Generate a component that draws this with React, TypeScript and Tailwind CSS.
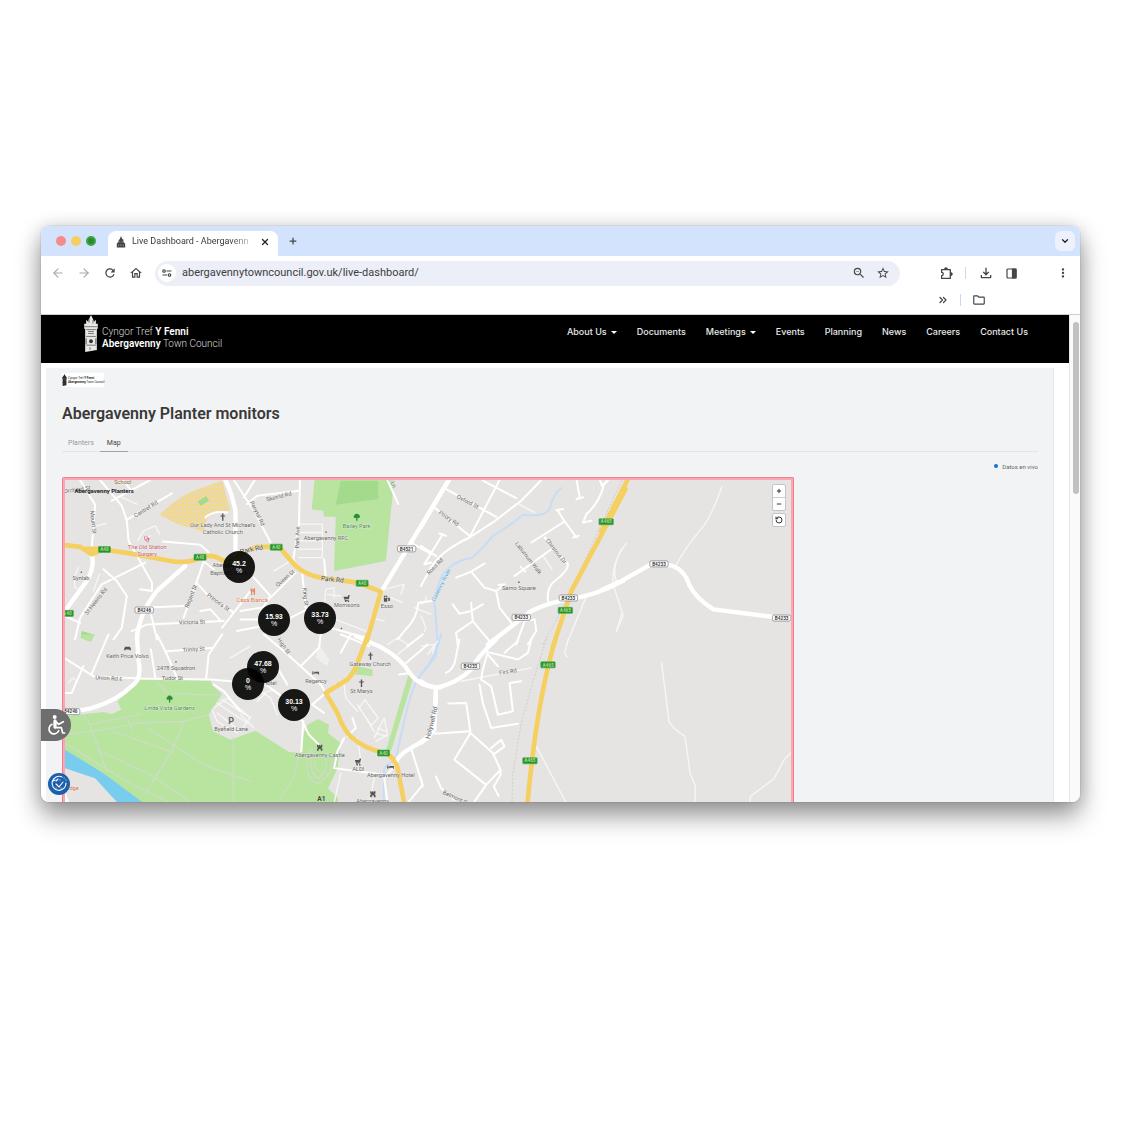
import { useState } from 'react'
import { ArrowLeft, ArrowRight, ChevronDown, ChevronsRight, Minus, Plus, RotateCcw, X } from 'lucide-react'
import {
  MdMoreVert, MdOutlineFileDownload, MdOutlineFolder, MdOutlineHome, MdOutlineZoomOut, MdRefresh, MdStarBorder,
} from 'react-icons/md'

type Label = { t: string; x: number; y: number; r?: number; c?: string; s?: number; b?: boolean }
type Icon = { k: keyof typeof icons; x: number; y: number; c?: string }
type Shield = { t: string; x: number; y: number; green?: boolean }

type Tile = {
  x: number
  y: number
  areas?: { d: string; fill: string }[]
  paths?: string
  river?: string
  track?: string
  minor?: string
  major?: string
  trunk?: string
  rail?: string
  labels?: Label[]
  icons?: Icon[]
  shields?: Shield[]
}

const icons = {
  cross: 'M-2 -11h4v6h5v3h-5v13h-4v-13h-5v-3h5z',
  tree: 'M-9 -1a6 6 0 0 1 2-7a8 8 0 0 1 14 0a6 6 0 0 1 2 7q-4 3-7 1v9h-4v-9q-3 2-7-1z',
  cart: 'M9 -9l-3 12h-11l1 2h9v2h-11l-1-4l-3-8h13l2-5zM-5 11h4v-4h-4zM3 11h4v-4h-4z',
  fuel: 'M-9 -9h10v18h-10zM-7 -6v4h6v-4zM3 -6l6 4v9h-5v-6h-2v-2h4v-2z',
  castle: 'M-8 -9h4v3h2v-3h4v3h2v-3h4v7h-2v4h2v7h-5v-5h-6v5h-5v-7h2v-4h-2z',
  bed: 'M-11 -6h3v5h3v-3h14v8h-3v-3h-14v3h-3z',
  car: 'M-7 -5h14l3 5v5h-4v-2h-12v2h-4v-5z',
  dot: 'M-2 -2h4v4h-4z',
  fork: 'M-6 -10h1v6h2v-6h2v6h2v-6h1v7l-2 3v10h-3v-10l-3-3zM5 -10h3v20h-3v-8h-2v-7z',
  steth: 'M-9 -8h4v2h-2v5q3 6 6 0v-5h-2v-2h4v7q-1 4-4 5q2 7 6 2v-4a3 3 0 1 1 2 0v4q-5 8-10-2q-4-1-4-5z',
}

const park = '#b8e4a0'

// every tile is drawn on a 3x grid, x and y place it on the map
const tiles: Tile[] = [
  {
    x: -5,
    y: -6,
    areas: [
      { d: 'M485 20L510 108L450 120Q430 145 432 172L350 150L298 122Q350 70 400 50Z', fill: 'url(#school)' },
      { d: 'M412 82L438 66L446 80L420 95Z', fill: '#a3da8c' },
      { d: 'M65 470L100 480L95 500L62 490Z', fill: '#a3da8c' },
    ],
    minor:
      'M60 18L105 92L98 180L95 225M120 18L185 95L200 140L205 200L240 262M155 80L270 18M198 138L335 58M430 262L408 325L370 430M408 325L440 360L520 415M308 202L420 212L445 235M255 265L125 330L60 430L45 495M240 262L275 325L275 350L240 345M130 285L170 320L200 365L185 460L160 495M15 425L60 445M240 400L370 395M215 470L260 450L490 440M485 460L570 350M435 130Q455 110 500 115M270 410L290 495M420 410L450 405L480 438M430 262L460 285M185 15L210 45',
    track: 'M232 200L250 170L285 155L298 180M250 195L270 185M110 155L138 148M55 280L42 310L45 340L60 345M185 70L230 90M100 350L118 300',
    major: 'M15 410L80 320Q105 280 95 240M230 495Q235 420 290 350L375 275M495 18Q515 60 525 110L525 250',
    trunk: 'M10 212L60 218L95 240L130 226L200 236L320 258Q370 270 410 255Q450 235 480 255L545 275M75 224L125 224L95 240',
    labels: [
      { t: 'School', x: 188, y: 29, c: '#8a6d3b' },
      { t: 'Orchard St', x: 52, y: 52, r: -8 },
      { t: 'Abergavenny Planters', x: 132, y: 57, c: '#222', s: 18, b: true },
      { t: 'Cantref Rd', x: 260, y: 110, r: -32 },
      { t: 'Mount St', x: 94, y: 145, r: 84 },
      { t: "Our Lady And St Michael's", x: 487, y: 158 },
      { t: 'Catholic Church', x: 487, y: 179 },
      { t: 'The Old Station', x: 261, y: 223, c: '#c5616b' },
      { t: 'Surgery', x: 261, y: 245, c: '#c5616b' },
      { t: 'Synlab', x: 63, y: 317 },
      { t: "St Helen's Rd", x: 112, y: 384, r: -52 },
      { t: 'Regent St', x: 397, y: 368, r: -68 },
      { t: "Prince's St", x: 470, y: 388, r: 36 },
      { t: 'Victoria St', x: 395, y: 449, r: -2 },
      { t: 'Abergavenny', x: 505, y: 279 },
      { t: 'Baptist Church', x: 505, y: 301 },
      { t: 'Casa Bianca', x: 575, y: 382, c: '#e0764a' },
    ],
    icons: [
      { k: 'cross', x: 487, y: 129 },
      { k: 'dot', x: 64, y: 294 },
      { k: 'steth', x: 261, y: 195, c: '#e0607a' },
      { k: 'fork', x: 575, y: 352, c: '#e0764a' },
    ],
    shields: [
      { t: 'A40', x: 133, y: 226, green: true },
      { t: 'A40', x: 419, y: 249, green: true },
      { t: 'A40', x: 22, y: 417, green: true },
      { t: 'B4246', x: 252, y: 407 },
    ],
  },
  {
    x: 175,
    y: -6,
    areas: [
      { d: 'M222 15L460 15L435 260L280 290L285 128L250 128L248 110L213 106Z', fill: park },
      { d: 'M300 20L412 20L412 75L285 92Z', fill: '#a3da8c' },
    ],
    track:
      'M175 150H245V250H175M175 175H245M175 200H245M175 225H245M100 290L150 260M250 400L255 345L280 340L280 370M260 360L300 365M430 345L490 330L480 360M450 370L485 385M245 460L270 430L375 470M390 430L430 440M520 400L570 420',
    minor:
      'M20 90L50 65L175 50M178 18L175 150L158 255L172 285M-20 18L40 110L90 205M10 70L45 15M250 255L255 310M185 300L195 400M90 370L165 295M40 310L90 365L60 410M440 18L472 90M510 205L570 240M0 435L60 435M250 455L375 490M150 430L210 400M570 380L532 385Q530 430 490 470L470 495M0 410L60 400M-10 470L140 440',
    major: 'M425 345L510 205L625 15',
    trunk: 'M-30 262Q20 225 50 218L115 218L165 275Q200 305 250 312L350 325L420 352L378 500',
    labels: [
      { t: 'Skerrid Rd', x: 116, y: 73, r: -14 },
      { t: 'y Ln', x: 450, y: 28, r: 65 },
      { t: 'Penytal Rd', x: 45, y: 120, r: 64 },
      { t: 'Park Ave', x: 176, y: 190, r: -88 },
      { t: 'Bailey Park', x: 347, y: 161, c: '#3f8a3c' },
      { t: 'Abergavenny RFC', x: 256, y: 198 },
      { t: 'Park Rd', x: 34, y: 232, r: -12, s: 20, c: '#444' },
      { t: 'Queen St', x: 137, y: 316, r: -40 },
      { t: 'Park Rd', x: 274, y: 322, r: 5, s: 20, c: '#444' },
      { t: 'King St', x: 189, y: 368, r: 84 },
      { t: 'Morrisons', x: 318, y: 399 },
      { t: 'Esso', x: 438, y: 401 },
    ],
    icons: [
      { k: 'tree', x: 348, y: 131, c: '#2d8c3c' },
      { k: 'dot', x: 256, y: 174 },
      { k: 'cart', x: 318, y: 372 },
      { k: 'fuel', x: 438, y: 373 },
      { k: 'dot', x: 302, y: 462 },
    ],
    shields: [
      { t: 'A40', x: 107, y: 219, green: true },
      { t: 'A40', x: 364, y: 327, green: true },
      { t: 'B4521', x: 497, y: 224 },
    ],
  },
  {
    x: -25,
    y: 154,
    areas: [
      { d: 'M300 135L510 138L518 155L545 178L505 240L518 290L570 315L645 288L745 352L780 355L788 300L800 270L832 253L865 270L862 295L900 325L890 400L862 460L892 490L890 520L320 520L190 415L75 348L75 245L190 232L215 238L243 225L232 200L260 175Z', fill: park },
      { d: 'M75 345L190 415L320 512L240 512L165 430L75 400Z', fill: '#78ccee' },
      { d: 'M75 470L92 512L75 512Z', fill: '#ffffff' },
      { d: 'M125 0L165 0L150 22L125 12Z', fill: park },
    ],
    paths:
      'M130 240L150 270L200 410M75 300L190 285L300 265L430 260L505 240M150 270L300 238M220 290L390 350M325 282L490 390L630 440M430 262L395 350L315 475M170 345L330 420L460 508M75 325L260 440L400 508M350 140L380 175L470 180L540 180M578 310V508M260 250L275 285',
    track: 'M520 220L560 190L625 245M530 235L600 290M530 205L620 265M545 195L630 250M600 290L632 245M85 145L100 130L110 140M570 70L630 35M515 225L530 260L590 295',
    minor:
      'M75 72L160 125L300 132L510 135L600 142M205 0L155 118M75 175L95 175L130 95M350 0L380 60L410 130M345 130L332 45M380 50L520 40M545 0L505 60L497 135M520 150L550 170L600 230',
    major: 'M290 0L295 80Q305 130 280 150Q230 200 150 222L75 235',
    labels: [
      { t: 'Keith Price Volvo', x: 262, y: 70 },
      { t: 'Trinity St', x: 460, y: 50, r: -4 },
      { t: '2478 Squadron', x: 407, y: 106 },
      { t: 'Union Rd E', x: 206, y: 137, r: 4 },
      { t: 'Tudor St', x: 396, y: 136 },
      { t: 'Linda Vista Gardens', x: 388, y: 225, c: '#3f8a3c' },
      { t: 'P', x: 572, y: 268, s: 27, b: true, c: '#666' },
      { t: 'Byefield Lane', x: 572, y: 288 },
      { t: 'Bridge', x: 92, y: 466, c: '#d0733c' },
    ],
    icons: [
      { k: 'car', x: 262, y: 42 },
      { k: 'dot', x: 407, y: 82 },
      { k: 'tree', x: 388, y: 195, c: '#2d8c3c' },
    ],
    shields: [{ t: 'B4246', x: 92, y: 231 }],
  },
  {
    x: 175,
    y: 154,
    areas: [
      { d: 'M505 112L518 125L450 350L436 345Z', fill: park },
      { d: 'M350 95L395 105L395 125L342 120Z', fill: park },
      { d: 'M235 30L265 75L260 95L225 70Z', fill: '#eeefef' },
    ],
    paths: 'M215 340Q200 420 235 430Q265 400 255 370M205 345Q185 440 235 445Q285 410 270 365M220 380Q225 410 240 410M175 355L160 430L120 490',
    river: 'M600 0Q590 60 540 120Q510 160 490 260L465 370L430 400L428 505',
    track:
      'M355 220L372 195L412 250L392 272ZM400 310L430 250L440 300L405 320M410 280L435 290M405 295L438 305M310 150L315 190L350 230M300 415L280 505M400 430L385 505M350 310L360 380M440 30L470 10L500 30M470 60L520 20M560 60L590 20M50 165L90 190L110 240M70 175L100 165M0 240L40 280M280 150L310 150M50 200L75 175M350 210L400 290',
    minor:
      'M70 0L130 50L180 95L240 150L255 175M180 95L235 40L240 0M255 175L215 210L250 235M75 150L130 190M105 90L140 150M182 255L205 300L240 335M188 260L182 350M310 310L290 350L280 400L430 420M320 305L345 280L335 250M330 0L300 55M300 0L385 35M510 115L475 120M510 340L545 450L500 505M460 395L430 430L440 505M545 0L500 35M490 90L560 30',
    major: 'M345 5L420 38Q480 70 510 120Q540 160 600 158M585 160L582 230Q580 290 560 310L510 340Q480 355 465 380',
    trunk: 'M382 0L350 85Q340 115 320 135L255 175L290 235Q310 290 335 310Q370 340 420 352Q455 355 470 400L492 515',
    labels: [
      { t: 'High St', x: 125, y: 38, r: 55 },
      { t: 'Gateway Church', x: 388, y: 94 },
      { t: 'Regency', x: 226, y: 144 },
      { t: 'St Marys', x: 362, y: 175 },
      { t: 'Hotel', x: 88, y: 152 },
      { t: 'Holywell Rd', x: 578, y: 266, r: -76, s: 19 },
      { t: 'Abergavenny Castle', x: 237, y: 367 },
      { t: 'ALDI', x: 352, y: 410 },
      { t: 'Abergavenny Hotel', x: 450, y: 426 },
      { t: 'A1', x: 242, y: 497, s: 20, c: '#444', b: true },
      { t: 'Abergavenny', x: 395, y: 505 },
    ],
    icons: [
      { k: 'cross', x: 389, y: 65 },
      { k: 'cross', x: 362, y: 146 },
      { k: 'bed', x: 226, y: 116 },
      { k: 'castle', x: 237, y: 339 },
      { k: 'cart', x: 352, y: 381 },
      { k: 'bed', x: 450, y: 398 },
      { k: 'castle', x: 396, y: 478 },
    ],
    shields: [{ t: 'A40', x: 428, y: 355, green: true }],
  },
  {
    x: 355,
    y: -6,
    river: 'M420 42Q395 60 385 105Q370 130 305 122Q260 160 215 185Q180 230 150 252Q90 260 60 310Q35 370 42 400L50 510',
    rail: 'M600 20L430 390L365 510',
    track: 'M495 365L435 510M600 225Q565 290 590 330M600 420L585 470M365 245L392 285M290 88L320 105L340 115M0 425L15 460L10 470M15 365L15 380L0 390',
    minor:
      'M360 18L300 80L215 145L145 190Q60 230 30 280L0 335M235 18L148 185M75 45L225 128M185 20L285 72M40 100L145 185M0 215L45 245M65 180L10 270L30 265M55 178L75 185M465 15L475 70M465 75L485 70M535 18L545 40Q530 90 495 120L485 145L510 140M560 18L545 35M330 205L430 142L408 108M430 142L465 190M405 108L425 105M455 190L472 185M280 305L390 225M298 278L312 292M370 190L440 270Q440 290 400 320Q375 340 380 380M105 310L150 292L190 340L225 350L235 400L270 445M150 292L190 268M225 350L250 330L232 332M95 390L115 418L150 410L185 390M150 385L155 440L205 500M155 440L105 475L110 510M285 510L310 440L340 435L345 470L320 510',
    major: 'M200 510L330 410Q380 385 440 375Q520 365 605 320M0 158L85 15',
    trunk: 'M612 45L530 200L450 350L395 515',
    labels: [
      { t: 'Oxford St', x: 137, y: 88, r: 27 },
      { t: 'Priory Rd', x: 80, y: 137, r: 34 },
      { t: 'Ross Rd', x: 46, y: 280, r: -46 },
      { t: 'Gavenny River', x: 65, y: 335, r: -63, c: '#4aa8d8' },
      { t: 'Laburnum Walk', x: 317, y: 255, r: 52 },
      { t: 'Chestnut Dr', x: 400, y: 234, r: 52 },
      { t: 'Sarno Square', x: 293, y: 348 },
    ],
    icons: [{ k: 'dot', x: 293, y: 324 }],
    shields: [
      { t: 'A465', x: 554, y: 143, green: true },
      { t: 'A465', x: 432, y: 408, green: true },
      { t: 'B4233', x: 441, y: 371 },
      { t: 'B4233', x: 300, y: 429 },
    ],
  },
  {
    x: 535,
    y: -6,
    track: 'M360 38Q340 100 310 150Q250 220 222 275M75 208Q30 260 35 330L65 425L45 470M15 20L-2 35',
    major: 'M0 347L60 320L145 272L200 272Q245 280 262 330Q280 370 335 405L570 435',
    trunk: 'M82 10L0 170',
    shields: [
      { t: 'B4233', x: 172, y: 269 },
      { t: 'B4233', x: 539, y: 431 },
    ],
  },
  {
    x: 355,
    y: 159,
    river: 'M50 0L45 50L0 105',
    rail: 'M375 0L340 110L300 250L275 400L272 490',
    track:
      'M345 320L435 490M440 0L430 40L437 52M720 70L742 245Q750 265 790 290L805 400L820 435V490M1110 335L1088 358L1055 418L985 470V490M120 125L330 85M0 20L40 15L35 40',
    minor:
      'M115 0L105 50Q100 90 75 100M200 38Q250 50 290 60L320 40L330 0M250 40L290 5M200 38L185 90L180 120L210 140L230 225L275 215L265 130L300 125M200 45L230 80M175 135L185 190L210 265L290 252M82 192L135 190L148 275L40 282M148 280L100 360L195 435L238 390L215 340ZM210 325L240 300L250 320L220 342M195 435L160 485M238 390V405L218 440L232 468M45 410L60 445L100 480M0 415L5 440',
    major: 'M225 0Q170 50 150 90Q110 130 45 145Q10 135 0 125M45 145L40 270L0 310',
    trunk: 'M402 0Q345 190 318 500',
    labels: [
      { t: 'Firs Rd', x: 261, y: 102, r: -8 },
      { t: 'Belmont Cr', x: 102, y: 479, r: 24 },
    ],
    shields: [
      { t: 'A465', x: 380, y: 76, green: true },
      { t: 'A465', x: 326, y: 363, green: true },
      { t: 'B4233', x: 148, y: 80 },
    ],
  },
]

const layers = [
  { key: 'paths', stroke: '#cddcc4', width: 4 },
  { key: 'river', stroke: '#c8dcf8', width: 6 },
  { key: 'rail', stroke: '#cfcfcd', width: 3 },
  { key: 'track', stroke: '#f6f7f6', width: 4 },
  { key: 'minor', stroke: '#ffffff', width: 6 },
  { key: 'major', stroke: '#ffffff', width: 13 },
  { key: 'trunk', stroke: '#f5d061', width: 14 },
] as const

const planters = [
  { value: '45.2', x: 174, y: 87 },
  { value: '15.93', x: 209, y: 140 },
  { value: '33.73', x: 255, y: 138 },
  { value: '0', x: 183, y: 204 },
  { value: '47.68', x: 198, y: 187 },
  { value: '30.13', x: 229, y: 225 },
]

const nav = [
  { label: 'About Us', menu: true },
  { label: 'Documents' },
  { label: 'Meetings', menu: true },
  { label: 'Events' },
  { label: 'Planning' },
  { label: 'News' },
  { label: 'Careers' },
  { label: 'Contact Us' },
]

function tileTransform(t: Tile) {
  return `translate(${t.x} ${t.y}) scale(${1 / 3})`
}

function StreetMap() {
  return (
    <svg
      viewBox="0 0 724 322"
      preserveAspectRatio="xMinYMin slice"
      className="block h-[322px] w-full font-['Roboto',sans-serif]"
      role="img"
      aria-label="Map of Abergavenny"
    >
      <defs>
        <pattern id="school" width="12" height="12" patternUnits="userSpaceOnUse">
          <rect width="12" height="12" fill="#f5d888" />
          <circle cx="3" cy="3" r="3" fill="#dedccf" />
          <circle cx="9" cy="9" r="2" fill="#dedccf" />
        </pattern>
      </defs>
      <rect width="724" height="322" fill="#e5e4e2" />
      {tiles.map((t, i) => (
        <g key={i} transform={tileTransform(t)}>
          {t.areas?.map(a => <path key={a.d} d={a.d} fill={a.fill} />)}
        </g>
      ))}
      {layers.map(l => (
        <g key={l.key} fill="none" stroke={l.stroke} strokeWidth={l.width} strokeLinejoin="round" strokeLinecap="round">
          {tiles.map((t, i) => t[l.key] && (
            <path key={i} d={t[l.key]} transform={tileTransform(t)} strokeDasharray={l.key === 'rail' ? '4 7' : undefined} />
          ))}
        </g>
      ))}
      {tiles.map((t, i) => (
        <g key={i} transform={tileTransform(t)} textAnchor="middle">
          {t.icons?.map((m, n) => (
            <path key={n} d={icons[m.k]} fill={m.c ?? '#555'} fillRule="evenodd" transform={`translate(${m.x} ${m.y})`} />
          ))}
          {t.labels?.map((m, n) => (
            <text
              key={n}
              transform={`translate(${m.x} ${m.y}) rotate(${m.r ?? 0})`}
              fontSize={m.s ?? 17}
              fontWeight={m.b ? 700 : 400}
              fill={m.c ?? '#666'}
              stroke="#f2f1ef"
              strokeWidth={m.b ? 0 : 2}
              paintOrder="stroke"
            >
              {m.t}
            </text>
          ))}
          {t.shields?.map((m, n) => {
            const w = m.green ? (m.t.length > 3 ? 43 : 36) : 55
            return (
              <g key={n} transform={`translate(${m.x} ${m.y})`}>
                <rect
                  x={-w / 2}
                  y={-9}
                  width={w}
                  height={18}
                  rx={m.green ? 2 : 5}
                  fill={m.green ? '#26922f' : '#fff'}
                  stroke={m.green ? '#4dad55' : '#777'}
                  strokeWidth={2}
                />
                <text y={5} fontSize={14} fontWeight={700} fill={m.green ? '#a8d98a' : '#444'}>{m.t}</text>
              </g>
            )
          })}
        </g>
      ))}
    </svg>
  )
}

function Tower({ className }: { className: string }) {
  return (
    <svg viewBox="0 0 16 38" className={className} fill="currentColor" aria-hidden="true">
      <path d="M8 0l2 4 1 3 2-2v4h2v5h-1v22l-12 2V14H1V9h2V5l2 2 1-3z" />
      <path d="M1 12h14M3 15h10M3 22h10M3 31h10M6 4v4M10 5v4M5 17h6M5 19h6M7 33v3" stroke="#777" strokeWidth="1" fill="none" />
      <circle cx="8" cy="27" r="2" fill="#333" />
      <path d="M3 24v6M13 24v6" stroke="#555" strokeWidth="1" />
    </svg>
  )
}

function TuneIcon() {
  return (
    <svg viewBox="0 0 20 16" className="h-2 w-2.5" fill="none" stroke="currentColor" strokeWidth="2.4" aria-hidden="true">
      <path d="M9 4h10M1 12h9" />
      <circle cx="4" cy="4" r="2.5" />
      <circle cx="15" cy="12" r="2.5" />
    </svg>
  )
}

function ExtensionIcon() {
  return (
    <svg viewBox="0 0 24 24" className="h-[13px] w-[13px]" fill="none" stroke="currentColor" strokeWidth="2.4" strokeLinejoin="round" aria-hidden="true">
      <path d="M3 5h16v16H3v-5c4 0 4-6 0-6z" />
      <path d="M8 4a3 3 0 0 1 6 0zM20 10a3 3 0 0 1 0 6z" fill="currentColor" strokeWidth="1" />
    </svg>
  )
}

function SidePanelIcon() {
  return (
    <svg viewBox="0 0 22 22" className="h-[11px] w-[11px]" fill="none" stroke="currentColor" strokeWidth="2.4" aria-hidden="true">
      <rect x="2" y="2" width="18" height="18" rx="2" />
      <path d="M13 2h7v18h-7z" fill="currentColor" />
    </svg>
  )
}

function WheelchairIcon() {
  return (
    <svg viewBox="0 0 60 64" className="h-[22px] w-5" fill="none" stroke="currentColor" strokeWidth="5" strokeLinecap="round" strokeLinejoin="round" aria-hidden="true">
      <circle cx="26" cy="8" r="6" fill="currentColor" stroke="none" />
      <path d="M27 20v18" strokeWidth="10" />
      <path d="M28 20l10 10 14-8M28 40h18l4 16h6" />
      <path d="M18 30a15 15 0 1 0 20 19" />
    </svg>
  )
}

function BrowserChrome() {
  const [url, setUrl] = useState('abergavennytowncouncil.gov.uk/live-dashboard/')

  return (
    <div className="border-b border-[#cfcfd2] bg-white text-[#444746]">
      <div className="flex h-[30px] items-end bg-[#d3e3fd] pr-[5px] pl-[15px]">
        <div className="flex gap-[5px] self-center">
          <span className="h-2.5 w-2.5 rounded-full bg-[#f58c8c]" />
          <span className="h-2.5 w-2.5 rounded-full bg-[#f5cf60]" />
          <span className="h-2.5 w-2.5 rounded-full border-2 border-[#3fa33f] bg-[#2c8a34]" />
        </div>
        <div className="ml-3 flex h-[25px] w-[170px] items-center rounded-t-lg bg-white pr-2 pb-1 pl-2">
          <svg viewBox="0 0 16 20" className="h-3 w-2.5 shrink-0" fill="#444" aria-hidden="true">
            <path d="M8 0l2 5 2 1v4l3 3v6H1v-6l3-4V7l2-2z" />
            <path d="M6 8v3M10 8v3M4 14v3M8 13v4M12 14v3" stroke="#aaa" strokeWidth="1" />
          </svg>
          <span className="ml-1.5 bg-linear-to-r from-[#333] from-85% to-[#bbb] bg-clip-text font-['Roboto',sans-serif] text-[9px] whitespace-nowrap text-transparent">
            Live Dashboard - Abergavenn
          </span>
          <button aria-label="Close tab" className="ml-auto"><X className="h-2.5 w-2.5 text-[#222]" strokeWidth={3} /></button>
        </div>
        <button aria-label="New tab" className="ml-2.5 self-center"><Plus className="h-2.5 w-2.5" strokeWidth={3} /></button>
        <button aria-label="Search tabs" className="ml-auto flex h-5 w-5 items-center justify-center self-center rounded-md bg-[#edf1fb]">
          <ChevronDown className="h-2.5 w-2.5 text-[#222]" strokeWidth={3} />
        </button>
      </div>
      <div className="flex h-[34px] items-center px-2.5">
        <div className="flex items-center gap-3">
          <button aria-label="Back"><ArrowLeft className="h-3.5 w-3.5 text-[#a9a9a9]" /></button>
          <button aria-label="Forward"><ArrowRight className="h-3.5 w-3.5 text-[#a9a9a9]" /></button>
          <button aria-label="Reload"><MdRefresh className="h-3.5 w-3.5" /></button>
          <button aria-label="Home"><MdOutlineHome className="h-3.5 w-3.5" /></button>
        </div>
        <div className="ml-3 flex h-[25px] min-w-0 flex-1 items-center rounded-full bg-[#eceff8] pr-2.5 pl-[3px]">
          <button aria-label="Site information" className="flex h-[18px] w-[18px] shrink-0 items-center justify-center rounded-full bg-white">
            <TuneIcon />
          </button>
          <input
            aria-label="Address"
            value={url}
            onChange={e => setUrl(e.target.value)}
            className="ml-1.5 min-w-0 flex-1 bg-transparent font-['Roboto',sans-serif] text-[11px] text-[#3c3d40] outline-none"
          />
          <button aria-label="Zoom"><MdOutlineZoomOut className="h-3.5 w-3.5" /></button>
          <button aria-label="Bookmark" className="ml-2.5"><MdStarBorder className="h-3.5 w-3.5" /></button>
        </div>
        <div className="flex w-[170px] items-center pl-10">
          <button aria-label="Extensions"><ExtensionIcon /></button>
          <span className="mx-3 h-3 w-px bg-[#c6d8f8]" />
          <button aria-label="Downloads"><MdOutlineFileDownload className="h-4 w-4" /></button>
          <button aria-label="Side panel" className="ml-3"><SidePanelIcon /></button>
          <button aria-label="Menu" className="ml-auto"><MdMoreVert className="h-3.5 w-3.5" /></button>
        </div>
      </div>
      <div className="flex h-6 items-center justify-end pr-[94px] pb-1">
        <button aria-label="More bookmarks"><ChevronsRight className="h-3 w-3" strokeWidth={2.5} /></button>
        <span className="mx-[11px] h-3 w-px bg-[#c6d8f8]" />
        <button aria-label="All bookmarks"><MdOutlineFolder className="h-3.5 w-3.5" /></button>
      </div>
    </div>
  )
}

function SiteHeader() {
  return (
    <header className="flex h-12 items-start bg-black pr-[41px] pl-[42px] text-white">
      <a href="#" className="flex items-start gap-[3px]">
        <Tower className="h-[37px] w-4 text-[#e8e8e6]" />
        <span className="mt-[11px] font-['Roboto',sans-serif] text-[10px] leading-3 font-light whitespace-nowrap text-[#ddd]">
          Cyngor Tref <b className="font-semibold text-white">Y Fenni</b>
          <br />
          <b className="font-semibold text-white">Abergavenny</b> Town Council
        </span>
      </a>
      <nav className="mt-[11px] ml-auto flex gap-5 font-['Inter',sans-serif] text-[9px] leading-3 font-medium text-[#e8e8e8]">
        {nav.map(item => (
          <a key={item.label} href="#" className="flex items-center gap-1 whitespace-nowrap">
            {item.label}
            {item.menu && <span className="h-0 w-0 border-x-[3px] border-t-[3px] border-x-transparent border-t-white" />}
          </a>
        ))}
      </nav>
    </header>
  )
}

function PlanterMap() {
  return (
    <section className="w-3/4 overflow-hidden rounded-t-xs border border-b-0 border-[#f0808c] bg-[#faa6b3] px-0.5 pt-0.5">
      <div className="relative overflow-hidden">
        <StreetMap />
        {planters.map(p => (
          <div
            key={p.value}
            className="absolute flex h-8 w-8 -translate-1/2 flex-col items-center justify-center rounded-full bg-black/90 font-['Liberation_Sans',sans-serif] text-[7px] leading-[7px] text-white"
            style={{ left: p.x, top: p.y }}
          >
            <b>{p.value}</b>
            <span>%</span>
          </div>
        ))}
        <div className="absolute top-1 right-[5px] flex flex-col gap-0.5 text-[#333]">
          <div className="flex flex-col divide-y divide-[#ccc] rounded-xs border border-[#c4c4c4] bg-white">
            <button aria-label="Zoom in" className="flex h-[13px] w-3 items-center justify-center"><Plus className="h-1.5 w-1.5" strokeWidth={4} /></button>
            <button aria-label="Zoom out" className="flex h-3 w-3 items-center justify-center"><Minus className="h-1.5 w-1.5" strokeWidth={4} /></button>
          </div>
          <button aria-label="Reset view" className="flex h-3.5 w-3.5 items-center justify-center rounded-xs border border-[#c4c4c4] bg-white">
            <RotateCcw className="h-2 w-2" strokeWidth={3} />
          </button>
        </div>
      </div>
    </section>
  )
}

function Dashboard() {
  const [tab, setTab] = useState('Map')

  return (
    <main className="mt-[5px] mr-[15px] ml-[5px] border-r border-[#e8e9ea] bg-[#f2f3f5] pt-[5px] pr-[15px] pl-4 font-['Roboto',sans-serif]">
      <div className="flex h-3.5 w-[42px] items-center gap-px bg-white text-[#222]">
        <Tower className="h-3 w-[5px] shrink-0" />
        <span className="text-[3px] leading-1 whitespace-nowrap">
          Cyngor Tref <b>Y Fenni</b>
          <br />
          <b>Abergavenny</b> Town Council
        </span>
      </div>
      <h1 className="mt-[17px] text-base leading-5 font-semibold text-[#3a3a3a]">Abergavenny Planter monitors</h1>
      <div role="tablist" className="mt-[11px] flex h-[17px] border-b border-[#e3e4e5] text-[7px]">
        {['Planters', 'Map'].map(name => (
          <button
            key={name}
            role="tab"
            aria-selected={tab === name}
            onClick={() => setTab(name)}
            className={tab === name ? 'h-[17px] border-b border-[#a8a29c] px-[7px] text-[#444]' : 'h-[17px] px-1.5 text-[#999]'}
          >
            {name}
          </button>
        ))}
      </div>
      <div className="mt-[9px] flex h-2.5 items-center justify-end gap-1 text-[6px] text-[#666]">
        <span className="h-1 w-1 rounded-full bg-[#1673c8]" />
        Datos en vivo
      </div>
      <div className="mt-1.5">
        <PlanterMap />
      </div>
    </main>
  )
}

export default function App() {
  return (
    <div className="bg-white pt-[226px] pr-[60px] pb-40 pl-[41px]">
      <div className="relative rounded-lg shadow-[0_0_1px_rgba(0,0,0,0.5),0_0_18px_rgba(0,0,0,0.14),0_14px_26px_rgba(0,0,0,0.4)]">
        <div className="overflow-hidden rounded-lg bg-white">
          <BrowserChrome />
          <div className="flex">
            <div className="min-w-0 flex-1">
              <SiteHeader />
              <Dashboard />
            </div>
            <div className="w-[11px] border-l border-[#e6e6e6] bg-[#fafafa] pt-[7px] pl-[3px]">
              <div className="h-[172px] w-1.5 rounded-full bg-[#c1c1c1]" />
            </div>
          </div>
        </div>
        <button
          aria-label="Accessibility"
          className="absolute bottom-[61px] left-0 flex h-8 w-[30px] items-center justify-center rounded-r-full bg-[#6e6e6e] text-white"
        >
          <WheelchairIcon />
        </button>
        <button aria-label="Cookie preferences" className="absolute bottom-[7px] left-[7px] h-[22px] w-[22px] rounded-full bg-[#1b5fad]">
          <svg viewBox="0 0 22 22" fill="none" stroke="#fff" strokeWidth="1.1" strokeLinecap="round">
            <path d="M18 10a7 7 0 1 1-4-6M8 11l3 3 4-5" />
            <path d="M16 5h.1M18 7h.1M5 8l2-1M8 8l2-2M12 7h.1M8 15h.1M13 15h.1" />
          </svg>
        </button>
      </div>
    </div>
  )
}
